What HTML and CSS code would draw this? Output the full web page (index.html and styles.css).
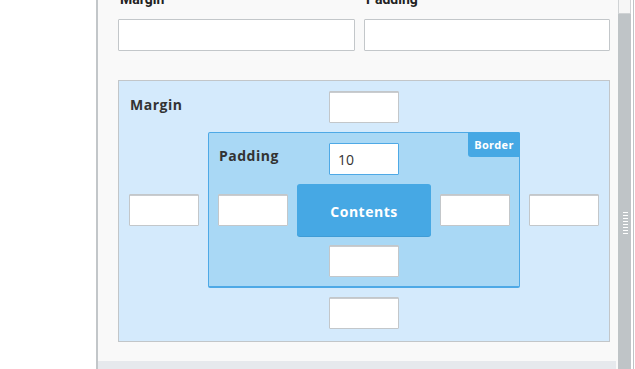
FILE: index.html
```html
<!DOCTYPE html>
<html lang="en">
<head>
<meta charset="UTF-8">
<title>Box Model</title>
<link rel="stylesheet" href="styles.css">
</head>
<body>

<div class="page">
	<div class="gutter"></div>

	<div class="panel">
		<div class="panel-body">
			<div class="fields">
				<div class="field">
					<label>Margin</label>
					<input type="text">
				</div>
				<div class="field">
					<label>Padding</label>
					<input type="text">
				</div>
			</div>

			<div class="margin-box">
				<div class="box-label margin-label">Margin</div>
				<input type="text" class="spot top">
				<input type="text" class="spot left">

				<div class="padding-box">
					<span class="border-tag">Border</span>
					<div class="box-label padding-label">Padding</div>
					<input type="text" class="spot top focus" value="10">
					<input type="text" class="spot left">
					<div class="contents">Contents</div>
					<input type="text" class="spot right">
					<input type="text" class="spot bottom">
				</div>

				<input type="text" class="spot right">
				<input type="text" class="spot bottom">
			</div>
		</div>
		<div class="panel-foot"></div>
	</div>

	<div class="scrollbar">
		<div class="track"></div>
		<div class="thumb"><div class="grip"></div></div>
	</div>
	<div class="edge"></div>
</div>

</body>
</html>
```

FILE: styles.css
```css
* {
	box-sizing: border-box;
	margin: 0;
	padding: 0;
}
html, body {
	background: #fff;
	color: #333;
	height: 100%;
	overflow: hidden;
}
body {
	font-family: "Open Sans", "Noto Sans", sans-serif;
	font-size: 14px;
}
.page {
	display: flex;
	height: 369px;
}
.gutter {
	width: 96px;
	background: #fff;
}

.panel {
	width: 522px;
	border-left: 2px solid #c2c6c9;
	background: #f9f9f9;
	display: flex;
	flex-direction: column;
}
.panel-body {
	flex: 1;
	padding: 19px 8px 0 20px;
}
.panel-foot {
	height: 8px;
	margin-right: 2px;
	background: #e6e9ed;
}

.fields {
	display: flex;
	gap: 9px;
}
.field {
	flex: 1;
	display: flex;
	flex-direction: column;
}
.field:first-child {
	flex: 0 0 237px;
}
.field label {
	font-family: Roboto, sans-serif;
	font-weight: bold;
	font-size: 14px;
	line-height: 20px;
	color: #222;
	margin: -30px 0 10px 2px;
}
input {
	font-family: inherit;
	font-size: 14px;
	color: #333;
	height: 32px;
	padding: 0 8px;
	border: 1px solid #c3c7ca;
	border-radius: 1px;
	background: #fff;
	outline: none;
}
.field input {
	width: 100%;
}

.margin-box {
	margin-top: 29px;
	display: grid;
	grid-template-columns: 70px 1fr 70px;
	grid-template-rows: 32px auto 32px;
	gap: 9px;
	padding: 10px 10px 12px;
	background: #d4eafc;
	border: 1px solid #c2c6c9;
}
.padding-box {
	position: relative;
	grid-column: 2;
	grid-row: 2;
	display: grid;
	grid-template-columns: 70px 1fr 70px;
	grid-template-rows: 32px 52px 32px;
	row-gap: 9px;
	padding: 10px 9px 9px;
	background: #a9d8f5;
	border: 1px solid #4ea9e6;
	border-bottom-width: 2px;
	border-radius: 2px;
}
.spot {
	width: 70px;
	box-shadow: inset 0 1px 0 #c9cccf;
}
.spot.top, .spot.bottom {
	grid-column: 2;
	justify-self: center;
}
.spot.top { grid-row: 1; }
.spot.bottom { grid-row: 3; }
.spot.left, .spot.right {
	grid-row: 2;
	align-self: center;
}
.spot.left { grid-column: 1; }
.spot.right { grid-column: 3; }
.spot.focus {
	border-color: #4ea9e6;
	box-shadow: none;
}

.box-label {
	grid-column: 1;
	grid-row: 1;
	white-space: nowrap;
	font-weight: bold;
	font-size: 14px;
	line-height: 20px;
	letter-spacing: 0.5px;
	color: #333;
	align-self: start;
}
.margin-label { margin: 4px 0 0 1px; }
.padding-label { margin: 3px 0 0 1px; }

.contents {
	grid-column: 2;
	grid-row: 2;
	width: 134px;
	justify-self: center;
	display: flex;
	align-items: center;
	justify-content: center;
	padding-top: 3px;
	background: #46a8e4;
	border-radius: 3px;
	box-shadow: 0 1px 0 #3f9cd6;
	color: #fff;
	font-weight: bold;
	font-size: 14px;
	letter-spacing: 0.5px;
}
.border-tag {
	position: absolute;
	top: -1px;
	right: -1px;
	width: 52px;
	height: 25px;
	line-height: 25px;
	text-align: center;
	background: #46a8e4;
	border-radius: 0 2px 0 3px;
	color: #fff;
	font-weight: bold;
	font-size: 11px;
	letter-spacing: 0.3px;
}

.scrollbar {
	width: 13px;
	display: flex;
	flex-direction: column;
}
.track {
	height: 14px;
	background: #f6f6f6;
	border: 1px solid #d0d3d5;
	border-top: none;
}
.thumb {
	flex: 1;
	background: #bfc4c7;
	padding: 198px 0 0 5px;
}
.grip {
	width: 5px;
	height: 22px;
	background: repeating-linear-gradient(#fff 0 1px, transparent 1px 3px);
}
.edge {
	width: 3px;
	border-left: 2px solid #fff;
	background: #bfc4c7;
}
```
